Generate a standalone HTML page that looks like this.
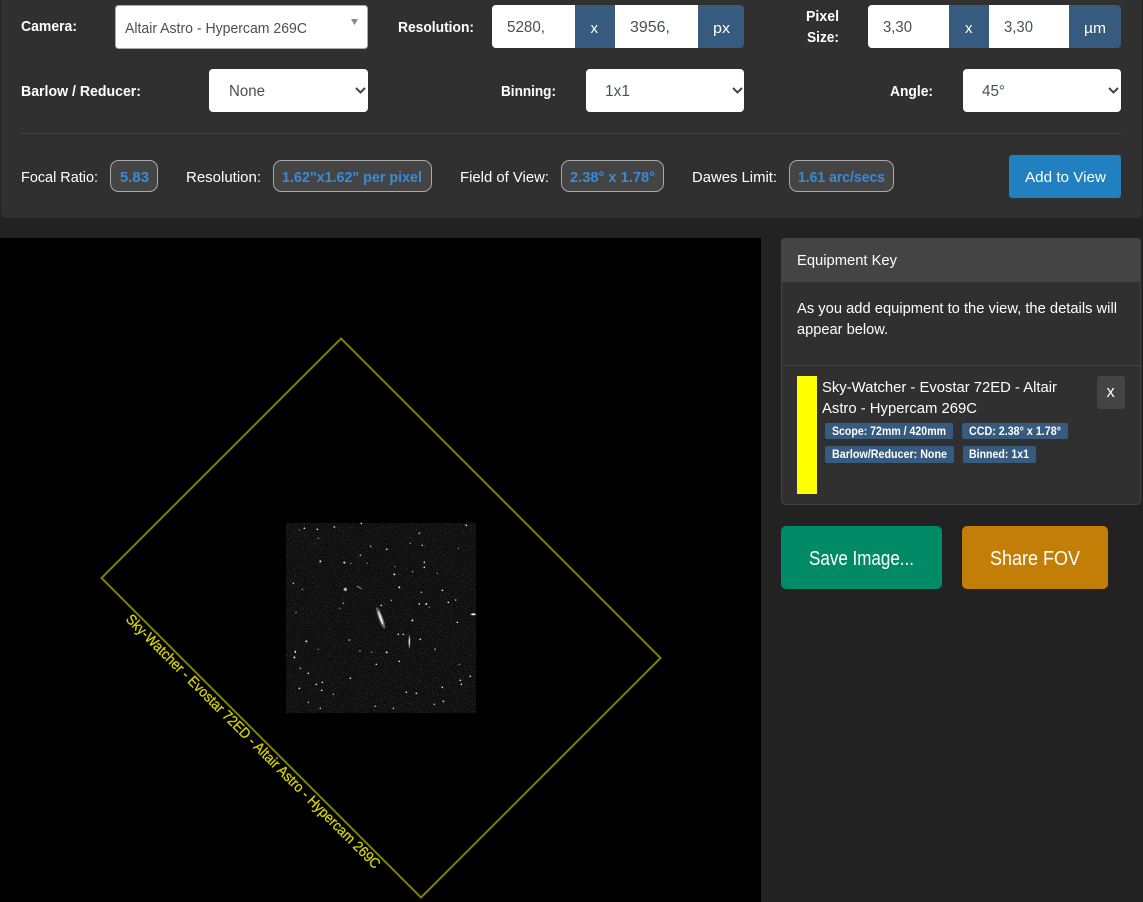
<!DOCTYPE html>
<html lang="en"><head><meta charset="utf-8"><title>Field of View Calculator</title>
<style>
html,body{margin:0;padding:0;background:#222;width:1143px;height:902px;overflow:hidden}
svg{display:block;position:absolute;left:0;top:0}
text{font-family:"Liberation Sans",Arial,sans-serif;white-space:pre}
.l{font-weight:700;font-size:15px;fill:#fff}
.r{font-size:15px;fill:#fff}
.v{font-size:15.500px;fill:#495057}
.b{font-weight:700;font-size:15px;fill:#3a8ad8}
.t{font-weight:700;font-size:11.500px;fill:#fff}
.pill{fill:#444;stroke:#aaa;stroke-width:1}
.chev{fill:none;stroke:#444;stroke-width:2}
</style></head><body>
<svg width="1143" height="902" viewBox="0 0 1143 902" xmlns="http://www.w3.org/2000/svg">
<defs>
<filter id="noise" x="0" y="0" width="100%" height="100%">
<feTurbulence type="fractalNoise" baseFrequency="0.9" numOctaves="1" seed="7"/>
<feColorMatrix type="matrix" values="0 0 0 0 1 0 0 0 0 1 0 0 0 0 1 .9 0 0 0 -.33"/>
</filter>
<filter id="speck" x="0" y="0" width="100%" height="100%">
<feTurbulence type="fractalNoise" baseFrequency="0.62" numOctaves="1" seed="21"/>
<feColorMatrix type="matrix" values="0 0 0 0 1 0 0 0 0 1 0 0 0 0 1 6 0 0 0 -4.05"/>
</filter>
<filter id="soft"><feGaussianBlur stdDeviation=".9"/></filter>
</defs>
<rect width="1143" height="902" fill="#222"/>
<rect x="1" y="-6" width="1141" height="224" rx="4" fill="#303030"/>

<text class="l" x="21" y="31" textLength="56" lengthAdjust="spacingAndGlyphs">Camera:</text>
<rect x="115.500" y="5.500" width="252" height="43" rx="3" fill="#fff" stroke="#aaa"/>
<text class="v" x="125" y="33" style="font-size:14.500px" textLength="182" lengthAdjust="spacingAndGlyphs">Altair Astro - Hypercam 269C</text>
<path d="M351 19h7l-3.500 6z" fill="#888"/>

<text class="l" x="398" y="32" textLength="76" lengthAdjust="spacingAndGlyphs">Resolution:</text>
<rect x="492" y="5" width="252" height="43" rx="4" fill="#375a7f"/>
<path d="M496 5h79v43h-79a4 4 0 0 1-4-4v-35a4 4 0 0 1 4-4z" fill="#fff"/>
<rect x="615" y="5" width="83" height="43" fill="#fff"/>
<text class="v" x="507" y="32" textLength="38" lengthAdjust="spacingAndGlyphs">5280,</text>
<text class="r" x="590.500" y="33">x</text>
<text class="v" x="630" y="32" textLength="40" lengthAdjust="spacingAndGlyphs">3956,</text>
<text class="r" x="713" y="33" textLength="17" lengthAdjust="spacingAndGlyphs">px</text>

<text class="l" x="806" y="21" textLength="33" lengthAdjust="spacingAndGlyphs">Pixel</text>
<text class="l" x="807" y="42" textLength="32" lengthAdjust="spacingAndGlyphs">Size:</text>
<rect x="868" y="5" width="253" height="43" rx="4" fill="#375a7f"/>
<path d="M872 5h77v43h-77a4 4 0 0 1-4-4v-35a4 4 0 0 1 4-4z" fill="#fff"/>
<rect x="989" y="5" width="80" height="43" fill="#fff"/>
<text class="v" x="883" y="32" textLength="29" lengthAdjust="spacingAndGlyphs">3,30</text>
<text class="r" x="965" y="33">x</text>
<text class="v" x="1004" y="32" textLength="29" lengthAdjust="spacingAndGlyphs">3,30</text>
<text class="r" x="1084" y="33" textLength="22" lengthAdjust="spacingAndGlyphs">µm</text>

<text class="l" x="21" y="96" textLength="120" lengthAdjust="spacingAndGlyphs">Barlow / Reducer:</text>
<rect x="209" y="69" width="159" height="43" rx="4" fill="#fff"/>
<text class="v" x="229" y="96" textLength="36" lengthAdjust="spacingAndGlyphs">None</text>
<path class="chev" d="M356 88l4.500 4.500 4.500-4.500"/>

<text class="l" x="501" y="96" textLength="55" lengthAdjust="spacingAndGlyphs">Binning:</text>
<rect x="586" y="69" width="158" height="43" rx="4" fill="#fff"/>
<text class="v" x="605" y="96" textLength="25" lengthAdjust="spacingAndGlyphs">1x1</text>
<path class="chev" d="M733 88l4.500 4.500 4.500-4.500"/>

<text class="l" x="890" y="96" textLength="43" lengthAdjust="spacingAndGlyphs">Angle:</text>
<rect x="963" y="69" width="158" height="43" rx="4" fill="#fff"/>
<text class="v" x="982" y="96" textLength="23" lengthAdjust="spacingAndGlyphs">45°</text>
<path class="chev" d="M1109 88l4.500 4.500 4.500-4.500"/>

<rect x="21" y="133" width="1100" height="1" fill="#444"/>

<text class="r" x="21" y="182" textLength="77" lengthAdjust="spacingAndGlyphs">Focal Ratio:</text>
<rect class="pill" x="110.500" y="160.500" width="47" height="31" rx="8"/>
<text class="b" x="120" y="182" textLength="29" lengthAdjust="spacingAndGlyphs">5.83</text>

<text class="r" x="186" y="182" textLength="75" lengthAdjust="spacingAndGlyphs">Resolution:</text>
<rect class="pill" x="273.500" y="160.500" width="158" height="31" rx="8"/>
<text class="b" x="282" y="182" textLength="140" lengthAdjust="spacingAndGlyphs">1.62"x1.62" per pixel</text>

<text class="r" x="460" y="182" textLength="89" lengthAdjust="spacingAndGlyphs">Field of View:</text>
<rect class="pill" x="561.500" y="160.500" width="102" height="31" rx="8"/>
<text class="b" x="570" y="182" textLength="85" lengthAdjust="spacingAndGlyphs">2.38° x 1.78°</text>

<text class="r" x="692" y="182" textLength="85" lengthAdjust="spacingAndGlyphs">Dawes Limit:</text>
<rect class="pill" x="789.500" y="160.500" width="104" height="31" rx="8"/>
<text class="b" x="798" y="182" textLength="87" lengthAdjust="spacingAndGlyphs">1.61 arc/secs</text>

<rect x="1009" y="155" width="112" height="43" rx="3" fill="#2080c0"/>
<text class="r" x="1025" y="182" textLength="81" lengthAdjust="spacingAndGlyphs">Add to View</text>

<!-- Canvas -->
<rect x="0" y="238" width="761" height="664" fill="#000"/>
<rect x="286" y="523" width="190" height="190" fill="#090909"/>
<rect x="286" y="523" width="190" height="190" filter="url(#noise)" opacity=".3"/>
<rect x="286" y="523" width="190" height="190" filter="url(#speck)" opacity=".25"/>
<g transform="translate(280 515) scale(.33333)" fill="#fff">
<g fill="#e0e0e0" filter="url(#soft)">
<circle cx="112" cy="43" r="2.500"/><circle cx="73" cy="40" r="2.500"/><circle cx="163" cy="36" r="3" opacity=".7"/><circle cx="244" cy="25" r="2.500"/><circle cx="58" cy="45" r="2" opacity=".6"/><circle cx="115" cy="70" r="2" opacity=".7"/><circle cx="320" cy="103" r="2.500"/><circle cx="272" cy="94" r="3" opacity=".6"/><circle cx="241" cy="121" r="2.500" opacity=".8"/><circle cx="121" cy="139" r="3"/><circle cx="193" cy="143" r="3"/><circle cx="213" cy="145" r="2" opacity=".6"/><circle cx="262" cy="145" r="2" opacity=".6"/><circle cx="433" cy="142" r="2.500"/><circle cx="433" cy="157" r="2.500"/><circle cx="345" cy="155" r="2" opacity=".6"/><circle cx="343" cy="178" r="3"/><circle cx="398" cy="170" r="2.500" opacity=".6"/><circle cx="472" cy="175" r="2" opacity=".6"/><circle cx="40" cy="205" r="2.500" opacity=".8"/><circle cx="358" cy="217" r="3"/><circle cx="424" cy="232" r="2.500" opacity=".7"/><circle cx="487" cy="226" r="2.500"/><circle cx="67" cy="223" r="2" opacity=".7"/><circle cx="190" cy="265" r="2.500" opacity=".7"/><circle cx="418" cy="267" r="2.500"/><circle cx="439" cy="267" r="3"/><circle cx="505" cy="262" r="2.500"/><circle cx="527" cy="255" r="2.500" opacity=".8"/><circle cx="304" cy="271" r="2.500"/><circle cx="334" cy="256" r="2.500" opacity=".7"/><circle cx="397" cy="316" r="3"/><circle cx="532" cy="322" r="2.500"/><circle cx="355" cy="358" r="2.500"/><circle cx="370" cy="358" r="2.500"/><circle cx="421" cy="373" r="2.500"/><circle cx="79" cy="379" r="3"/><rect x="44" y="407" width="4" height="7"/><circle cx="43" cy="427" r="3"/><circle cx="320" cy="412" r="3"/><circle cx="358" cy="439" r="2.500"/><circle cx="289" cy="448" r="2.500"/><circle cx="85" cy="475" r="2.500"/><circle cx="211" cy="490" r="2.500"/><circle cx="127" cy="502" r="2.500"/><circle cx="109" cy="508" r="2.500"/><circle cx="58" cy="520" r="2.500"/><circle cx="125" cy="526" r="2.500"/><circle cx="487" cy="517" r="2.500"/><circle cx="379" cy="532" r="2.500"/><circle cx="409" cy="535" r="2.500"/><circle cx="490" cy="559" r="2.500"/><circle cx="571" cy="484" r="2.500"/><circle cx="541" cy="496" r="2.500"/><circle cx="544" cy="508" r="2.500"/><circle cx="559" cy="31" r="2.500"/><circle cx="418" cy="55" r="3.500" opacity=".5"/><circle cx="427" cy="91" r="2.500" opacity=".8"/><circle cx="391" cy="85" r="2" opacity=".7"/><circle cx="535" cy="100" r="2" opacity=".6"/><circle cx="85" cy="562" r="2.500" opacity=".8"/><circle cx="121" cy="580" r="2.500" opacity=".8"/><circle cx="340" cy="580" r="2.500" opacity=".8"/><circle cx="463" cy="568" r="2.500" opacity=".8"/><circle cx="286" cy="574" r="2.500" opacity=".7"/><circle cx="160" cy="538" r="2.500" opacity=".7"/><circle cx="61" cy="460" r="3" opacity=".6"/><circle cx="538" cy="448" r="2" opacity=".7"/><circle cx="448" cy="277" r="2" opacity=".6"/><circle cx="180" cy="280" r="2" opacity=".6"/><circle cx="48" cy="293" r="3" opacity=".4"/><circle cx="115" cy="403" r="2" opacity=".6"/><circle cx="240" cy="408" r="2.500" opacity=".6"/><circle cx="275" cy="412" r="2" opacity=".6"/><circle cx="465" cy="403" r="3.500" opacity=".4"/><circle cx="208" cy="375" r="3.500" opacity=".5"/>
</g>
<g filter="url(#soft)">
<circle cx="196" cy="223" r="6" opacity=".35"/><circle cx="196" cy="223" r="3"/>
<path d="M231 213l14 9" stroke="#999" stroke-width="2.500"/>
<ellipse cx="302" cy="309" rx="7" ry="34" transform="rotate(-20 302 309)" opacity=".35"/>
<ellipse cx="302" cy="309" rx="3" ry="22" transform="rotate(-20 302 309)" opacity=".9"/>
<ellipse cx="388" cy="380" rx="3" ry="20" opacity=".4"/>
<ellipse cx="388" cy="380" rx="1.500" ry="12" opacity=".9"/>
<ellipse cx="580" cy="298" rx="9" ry="3.500" opacity=".5"/>
<ellipse cx="580" cy="298" rx="5" ry="2"/>
</g>
</g>
<path d="M341 338.500L660.500 658 421 897.500 101.500 578z" fill="none" stroke="#808000" stroke-width="2"/>
<text transform="translate(125 620) rotate(45)" font-size="14.500" fill="#d4d400" stroke="#d4d400" stroke-width=".3" textLength="353" lengthAdjust="spacingAndGlyphs">Sky-Watcher - Evostar 72ED - Altair Astro - Hypercam 269C</text>

<!-- Equipment key -->
<rect x="781.500" y="238.500" width="359" height="266" rx="4" fill="#303030" stroke="#444"/>
<path d="M785 238h352a4 4 0 0 1 4 4v40h-360v-40a4 4 0 0 1 4-4z" fill="#444"/>
<text class="r" x="797" y="265" textLength="100" lengthAdjust="spacingAndGlyphs">Equipment Key</text>
<text class="r" x="797" y="313" textLength="320" lengthAdjust="spacingAndGlyphs">As you add equipment to the view, the details will</text>
<text class="r" x="797" y="334" textLength="91" lengthAdjust="spacingAndGlyphs">appear below.</text>
<rect x="782" y="365" width="358" height="1" fill="#444"/>
<rect x="797" y="376" width="20" height="118" fill="#ff0"/>
<text class="r" x="822" y="392" textLength="235" lengthAdjust="spacingAndGlyphs">Sky-Watcher - Evostar 72ED - Altair</text>
<text class="r" x="822" y="413" textLength="155" lengthAdjust="spacingAndGlyphs">Astro - Hypercam 269C</text>
<rect x="825" y="423" width="128" height="16" rx="2" fill="#375a7f"/>
<text class="t" x="832" y="435" textLength="114" lengthAdjust="spacingAndGlyphs">Scope: 72mm / 420mm</text>
<rect x="962" y="423" width="106" height="16" rx="2" fill="#375a7f"/>
<text class="t" x="969" y="435" textLength="92" lengthAdjust="spacingAndGlyphs">CCD: 2.38° x 1.78°</text>
<rect x="825" y="446" width="129" height="17" rx="2" fill="#375a7f"/>
<text class="t" x="832" y="458" textLength="115" lengthAdjust="spacingAndGlyphs">Barlow/Reducer: None</text>
<rect x="963" y="446" width="73" height="17" rx="2" fill="#375a7f"/>
<text class="t" x="969" y="458" textLength="60" lengthAdjust="spacingAndGlyphs">Binned: 1x1</text>
<rect x="1097" y="376" width="28" height="33" rx="3" fill="#444"/>
<text class="r" x="1106.500" y="397" style="font-size:16.500px">x</text>

<rect x="781" y="526" width="161" height="63" rx="5" fill="#008a65"/>
<text x="809" y="565" font-size="20" fill="#fff" textLength="105" lengthAdjust="spacingAndGlyphs">Save Image...</text>
<rect x="962" y="526" width="146" height="63" rx="5" fill="#c37e08"/>
<text x="990" y="565" font-size="20" fill="#fff" textLength="90" lengthAdjust="spacingAndGlyphs">Share FOV</text>
</svg>
</body></html>
